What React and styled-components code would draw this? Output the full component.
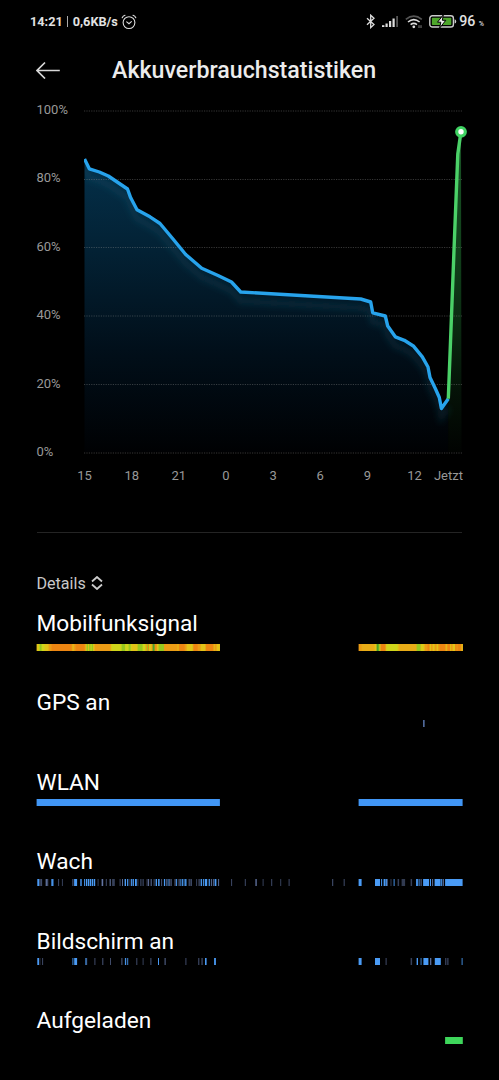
import styled, { createGlobalStyle } from "styled-components";

const yLabels = ["100%", "80%", "60%", "40%", "20%", "0%"];
const hours = ["15", "18", "21", "0", "3", "6", "9", "12"];
const gridLines = [5, 73.5, 141.5, 210, 278.5, 347];

const discharge =
  "0.5,53 5.3,62.8 15.3,66 24.3,70 43.5,83 46.7,91.8 53,103.8 66,110.8 76,117.5 89,133 101.7,148.5 117.7,162.3 134,169.5 147.5,176 156.7,186 276.7,193 286.7,196 288.7,206.8 301.3,210 303.7,220 311.3,230.8 320.3,234.3 329.7,240.3 338.3,250.8 344,261 346,271.5 351.3,282.5 355.3,291.5 357.4,302.5 364.3,292.7";
const charge = "364.3,292.7 366.5,236 370,144 373.8,48 377,25.5";

// signal strength: [start, colour key] with each band running up to the next start
const signalNight = [
  [0, "y"], [2, "l"], [3, "g"], [5, "l"], [8, "y"], [12, "o"], [15, "r"], [35, "o"], [36, "y"], [37, "o"],
  [39, "r"], [48, "o"], [49, "y"], [50, "g"], [51.5, "y"], [52.5, "g"], [54, "l"], [55, "g"], [56.5, "y"], [58, "o"],
  [74, "y"], [75, "l"], [85, "g"], [88.5, "l"], [92, "g"], [94, "l"], [95, "y"], [101, "g"], [106, "l"], [109, "o"],
  [110.5, "g"], [111.5, "r"], [112.5, "l"], [113.5, "y"], [115, "o"], [116, "d"], [118, "o"], [119, "r"], [120, "y"], [122, "g"],
  [127.5, "o"], [141, "y"], [142, "r"], [148, "o"], [150, "y"], [155, "l"], [156, "o"], [157, "r"], [161, "o"], [164, "y"],
  [169, "r"], [177, "y"], [178, "o"], [180, "y"], [183.3, null],
];
const signalDay = [
  [322, "o"], [325, "a"], [338, "y"], [340, "d"], [342, "g"], [343, "y"], [344, "r"], [349, "y"], [350, "l"], [361, "y"],
  [362, "a"], [380, "g"], [384, "y"], [385.5, "l"], [386.5, "y"], [388, "o"], [391, "r"], [393, "y"], [394.5, "o"], [396, "y"],
  [398, "o"], [400, "y"], [401.5, "o"], [403, "r"], [409, "y"], [410, "o"], [411, "r"], [413.5, "y"], [414.5, "o"], [416, "y"],
  [418.5, "r"], [420, "o"], [421, "r"], [424, "o"], [425, "y"], [426, null],
];
const signalColors = {
  y: "#e2c317",
  l: "#cfd51a",
  g: "#96c81e",
  d: "#49a32c",
  a: "#e8ac17",
  o: "#eb9c15",
  r: "#ec8512",
};

// every band runs to the end of its block and the next one covers it, so no seams show
const toBands = (list) => {
  const end = list[list.length - 1][0];
  return list.slice(0, -1).map(([x, key]) => [x, end - x, signalColors[key]]);
};

// activity ticks: [x, width, opacity]
const awake = [
  [0.7, 2, 0.75], [3, 1, 0.45], [4.5, 1, 0.4], [9, 2, 0.5], [11, 0.7, 0.3], [14.7, 2.2, 0.65], [21.5, 1, 0.35], [25.3, 1, 0.3],
  [35.8, 1, 0.45], [37.5, 3, 1], [43.7, 1.4, 0.8], [47.4, 1.2, 0.6], [49.4, 1.3, 0.75], [51.3, 1.1, 0.7], [53, 1.7, 0.9],
  [55.3, 1.4, 0.7], [57.3, 1.3, 0.8], [61, 1, 0.3], [65, 1.6, 0.55], [69.2, 1, 0.35], [73, 1.2, 0.5], [75.5, 2.7, 0.3],
  [83, 1, 0.35], [85.4, 1, 0.5], [88, 1.4, 0.9], [90.5, 1.2, 0.75], [93, 0.8, 0.4], [94.5, 1.3, 0.7], [96.3, 1, 0.8],
  [98.4, 1.8, 0.95], [101, 0.7, 0.4], [103.8, 1, 0.4], [106, 1, 0.4], [110, 1, 0.35], [111.5, 1, 0.55], [114, 1.2, 0.45],
  [117, 1, 0.35], [119, 1.4, 0.75], [121.5, 1.5, 0.8], [124.5, 1, 0.4], [127.3, 1.3, 0.8], [129.5, 1, 0.4], [131, 1, 0.6],
  [132.5, 1, 0.45], [134, 1, 0.5], [138, 1, 0.5], [139.5, 1, 0.7], [142, 1, 0.5], [143.7, 1, 0.6], [145.3, 1, 0.8],
  [147, 1, 0.6], [148.5, 1.4, 0.85], [152, 1.2, 0.4], [154, 1, 0.55], [159.5, 1, 0.3], [162, 1, 0.45], [164, 1.4, 0.65],
  [166.3, 1.2, 0.6], [168.2, 2.4, 0.95], [172, 1.5, 0.6], [174.5, 1, 0.5], [176.4, 1.1, 0.4], [178, 1.8, 1], [181.5, 1, 0.5],
  [194.5, 1, 0.35], [208.2, 1, 0.35], [218.6, 1.8, 0.4], [226, 1, 0.3], [234.6, 1, 0.35], [243.6, 1, 0.3], [252, 1, 0.35],
  [295.6, 1, 0.4], [307, 1.2, 0.3],
  [322, 3, 1], [338.4, 5, 1], [344.5, 1, 0.7], [347, 1.5, 0.7], [348.8, 1.5, 0.8], [350.3, 0.8, 0.5], [354, 0.8, 0.35],
  [357, 1, 0.65], [361, 1.5, 0.3], [365, 3.5, 0.27], [374, 1.5, 0.3], [379.5, 1.8, 0.7], [382, 1, 0.65], [384, 1, 0.5],
  [386.5, 6, 1], [393.4, 1, 0.75], [395.5, 1, 0.5], [398, 6, 1], [404.5, 1.2, 0.65], [406.3, 1, 0.5], [408.5, 17.5, 1],
];
const screenOn = [
  [0.7, 1.7, 0.7], [3, 0.7, 0.35], [5.5, 1, 0.35], [35.8, 1, 0.6], [37.6, 2.9, 1], [48.7, 1.4, 0.6], [50, 0.6, 0.3],
  [57.8, 1, 0.35], [65.7, 1, 0.4], [73.4, 1, 0.35], [84.8, 1, 0.45], [88.3, 1.3, 0.65], [90.6, 1, 0.6], [99.7, 1, 0.35],
  [106, 1, 0.3], [113.8, 1, 0.4], [121.4, 1, 0.7], [128, 1, 0.5], [148.8, 1, 0.35], [161.7, 1, 0.4], [165, 0.9, 0.5],
  [168.4, 1.6, 0.9], [177.5, 1.8, 0.95],
  [322, 3, 1], [338.4, 5, 1], [349, 1, 0.35], [374, 1.5, 0.3], [380, 1.4, 0.75], [384, 0.9, 0.6], [386.8, 5, 1],
  [393.5, 1.2, 0.55], [398.2, 6, 1], [408.7, 1, 0.4], [410.8, 1, 0.4], [425, 1, 0.6],
];

const blue = "#4196f5";
const toTicks = (list) =>
  list.map(([x, w, o]) => [x, w, o < 0.6 ? "#7c93cd" : "#4a9bf5", Math.min(1, o * 1.45)]);

const rows = [
  { title: "Mobilfunksignal", gap: 8, bars: [...toBands(signalNight), ...toBands(signalDay)] },
  { title: "GPS an", bars: [[386.5, 1.5, "#6281bd", 0.9]] },
  { title: "WLAN", bars: [[0, 183.3, blue], [322, 104, blue]] },
  { title: "Wach", bars: toTicks(awake) },
  { title: "Bildschirm an", bars: toTicks(screenOn) },
  { title: "Aufgeladen", bars: [[408.5, 17.7, "#3ed65b"]] },
];

function AlarmIcon() {
  return (
    <svg width="16" height="16" viewBox="0 0 16 16" fill="none" stroke="#ddd" strokeWidth="1.1" strokeLinecap="round">
      <circle cx="8" cy="8.6" r="5.9" />
      <path d="M5.7 7.8 8 9.7l2.4-2M1.2 3.7Q2 1.8 4 1.2M14.8 3.7Q14 1.8 12 1.2" />
    </svg>
  );
}

function BluetoothIcon() {
  return (
    <svg width="10" height="15" viewBox="0 0 10 15" fill="none" stroke="#ddd" strokeWidth="1.3">
      <path d="M1 4.2 8 10.5 4.7 13.6V1.2L8 4.3 1 10.7" />
    </svg>
  );
}

function SignalIcon() {
  return (
    <svg width="17" height="13" viewBox="0 0 17 13" fill="#ddd">
      <rect x="0" y="10.2" width="2.4" height="1.8" />
      <rect x="3.5" y="8.5" width="2.2" height="3.5" />
      <rect x="7" y="6" width="2.2" height="6" />
      <rect x="10.5" y="3.5" width="2.2" height="8.5" />
      <rect x="14.2" y="1" width="1.8" height="11" fill="#555" />
    </svg>
  );
}

function WifiIcon() {
  return (
    <svg width="18" height="14" viewBox="0 0 18 14" fill="none" stroke="#ddd" strokeWidth="1.6">
      <path d="M.8 4.3Q8.8-2.2 16.8 4.3" stroke="#555" />
      <path d="M3 7Q8.8 2.2 14.6 7M5.6 9.6q3.2-2.4 6.4 0" />
      <circle cx="8.8" cy="11.8" r="1.4" fill="#ddd" stroke="none" />
      <path d="M14 10.2v2.8M16 10.2v2.8" stroke="#888" strokeWidth=".9" />
    </svg>
  );
}

function BatteryIcon() {
  return (
    <svg width="28" height="13" viewBox="0 0 28 13">
      <rect x=".8" y=".8" width="23.6" height="11.2" rx="2.6" fill="none" stroke="#ccc" strokeWidth="1.4" />
      <path d="M25.6 4.3q1.6.3 1.6 2.1t-1.6 2.1z" fill="#ccc" />
      <rect x="2.9" y="2.8" width="19.4" height="7.2" rx=".8" fill="#4da62b" />
      <path d="M14.2 0 8.5 7.2h3.3L10.7 13l6.1-7.7h-3.4z" fill="#eee" stroke="#000" strokeWidth="1" />
    </svg>
  );
}

function BatteryChart() {
  return (
    <Plot viewBox="0 0 384 358">
      <defs>
        <linearGradient id="blueFill" gradientUnits="userSpaceOnUse" x1="0" y1="53" x2="0" y2="346">
          <stop offset="0" stopColor="#04304a" />
          <stop offset=".3" stopColor="#032235" />
          <stop offset=".65" stopColor="#010f1a" />
          <stop offset="1" stopColor="#000103" />
        </linearGradient>
        <linearGradient id="greenFill" gradientUnits="userSpaceOnUse" x1="0" y1="25" x2="0" y2="346">
          <stop offset="0" stopColor="#1a5727" />
          <stop offset=".45" stopColor="#0f3b18" />
          <stop offset=".8" stopColor="#051308" />
          <stop offset="1" stopColor="#010301" />
        </linearGradient>
        <filter id="glow" x="-10%" y="-10%" width="120%" height="130%">
          <feGaussianBlur stdDeviation="3.2" />
        </filter>
        <clipPath id="belowLine">
          <polygon points={`${discharge} 377.5,292.7 377.5,358 0.5,358`} />
        </clipPath>
      </defs>
      <polygon points={`${discharge} 364.3,346.5 0.5,346.5`} fill="url(#blueFill)" />
      <polygon points={`${charge} 377.5,346.5 364.3,346.5`} fill="url(#greenFill)" />
      <g clipPath="url(#belowLine)">
        <polyline points={discharge} transform="translate(0 9)" fill="none" stroke="#1c7088" strokeOpacity=".2" strokeWidth="6" filter="url(#glow)" />
      </g>
      {gridLines.map((y) => (
        <line key={y} x1="0" x2="379" y1={y} y2={y} stroke="#959595" strokeOpacity=".36" strokeDasharray="1.2 1.2" />
      ))}
      <polyline points={discharge} fill="none" stroke="#27a3ec" strokeWidth="3.4" strokeLinejoin="round" />
      <polyline points={charge} fill="none" stroke="#4bd168" strokeWidth="3.4" strokeLinejoin="round" />
      <circle cx="377" cy="25.8" r="4.3" fill="#fff" stroke="#3fd362" strokeWidth="3.2" />
    </Plot>
  );
}

export default function App() {
  return (
    <Screen>
      <GlobalStyle />
      <StatusBar>
        <StatusGroup>
          <StatusText>14:21</StatusText>
          <Separator />
          <StatusText>0,6KB/s</StatusText>
          <AlarmIcon />
        </StatusGroup>
        <StatusIcons>
          <BluetoothIcon />
          <SignalIcon />
          <WifiIcon />
          <BatteryIcon />
          <Percent>
            96 <small>%</small>
          </Percent>
        </StatusIcons>
      </StatusBar>

      <Header>
        <BackButton aria-label="Zurück">
          <svg width="24" height="18" viewBox="0 0 24 18" fill="none" stroke="#d8d8d8" strokeWidth="1.7">
            <path d="M23.8 9.5H1.2M9 1.5l-8 8 8 8" />
          </svg>
        </BackButton>
        <Title>Akkuverbrauchstatistiken</Title>
      </Header>

      <ChartArea>
        <YAxis>
          {yLabels.map((label) => (
            <span key={label}>{label}</span>
          ))}
        </YAxis>
        <BatteryChart />
      </ChartArea>
      <XAxis>
        {hours.map((hour) => (
          <Hour key={hour}>{hour}</Hour>
        ))}
        <Now>Jetzt</Now>
      </XAxis>

      <Divider />

      <DetailsButton>
        Details
        <svg width="12" height="14" viewBox="0 0 12 14" fill="none" stroke="#ccc" strokeWidth="1.8">
          <path d="M1 5.5 6 1l5 4.5M1 8.5 6 13l5-4.5" />
        </svg>
      </DetailsButton>

      {rows.map(({ title, gap, bars }) => (
        <Row key={title}>
          <RowTitle>{title}</RowTitle>
          <Timeline viewBox="0 0 427 7" $gap={gap}>
            {bars.map(([x, w, fill, opacity = 1]) => (
              <rect key={x} x={x + 0.6} y="0" width={w} height="7" fill={fill} opacity={opacity} />
            ))}
          </Timeline>
        </Row>
      ))}
    </Screen>
  );
}

const GlobalStyle = createGlobalStyle`
  body {
    margin: 0;
    background: #000;
  }
`;

const Screen = styled.main`
  box-sizing: border-box;
  width: 499px;
  height: 1080px;
  overflow: hidden;
  background: #000;
  color: #fff;
  font-family: Roboto, "Liberation Sans", sans-serif;
`;

const StatusBar = styled.div`
  display: flex;
  justify-content: space-between;
  align-items: center;
  height: 43px;
  padding: 0 15px 0 30px;
  color: #e2e2e2;
`;
const StatusGroup = styled.div`
  display: flex;
  align-items: center;

  svg {
    margin-left: 3px;
  }
`;
const StatusText = styled.span`
  font-size: 12.7px;
  font-weight: 700;
  line-height: 16px;
`;
const Separator = styled.span`
  width: 1px;
  height: 11px;
  margin: 0 4.5px;
  background: #aaa;
`;
const StatusIcons = styled.div`
  display: flex;
  align-items: center;
  gap: 6px;
`;
const Percent = styled.span`
  margin: 2px 0 0 -4px;
  font-size: 14.2px;
  font-weight: 500;
  line-height: 16px;

  small {
    font-size: 7px;
  }
`;

const Header = styled.header`
  display: flex;
  align-items: center;
  height: 54px;
  padding-left: 36px;
`;
const BackButton = styled.button`
  display: flex;
  width: 76px;
  padding: 0;
  border: none;
  background: none;
`;
const Title = styled.h1`
  margin: 0;
  color: #ececec;
  font-size: 23.2px;
  font-weight: 500;
  line-height: 30px;
`;

const ChartArea = styled.section`
  display: flex;
  height: 362px;
  padding: 5px 0 0 36.5px;
`;
const YAxis = styled.div`
  display: flex;
  flex-direction: column;
  justify-content: space-between;
  width: 47.5px;
  height: 358px;
  color: #989898;
  font-size: 13px;
  line-height: 16px;
`;
const Plot = styled.svg`
  width: 384px;
  height: 358px;
  margin-top: 4px;
`;
const XAxis = styled.div`
  display: flex;
  padding: 4px 0 0 61px;
  color: #989898;
  font-size: 13px;
  line-height: 16px;
`;
const Hour = styled.span`
  width: 47.15px;
  text-align: center;
`;
const Now = styled.span`
  margin-left: -4.2px;
`;

const Divider = styled.hr`
  height: 1px;
  margin: 48px 37px 0;
  border: none;
  background: #242424;
`;
const DetailsButton = styled.button`
  display: flex;
  align-items: center;
  gap: 5px;
  height: 20px;
  margin: 40px 0 19px 36.5px;
  padding: 0;
  border: none;
  background: none;
  color: #c8c8c8;
  font-family: inherit;
  font-size: 16.1px;
`;

const Row = styled.section`
  height: 79.4px;
  padding-left: 36px;
`;
const RowTitle = styled.h2`
  margin: 0;
  padding-left: 0.5px;
  font-size: 22.7px;
  font-weight: 400;
  line-height: 24px;
`;
const Timeline = styled.svg`
  display: block;
  width: 427px;
  height: 7px;
  margin-top: ${({ $gap = 4.5 }) => $gap}px;
`;
